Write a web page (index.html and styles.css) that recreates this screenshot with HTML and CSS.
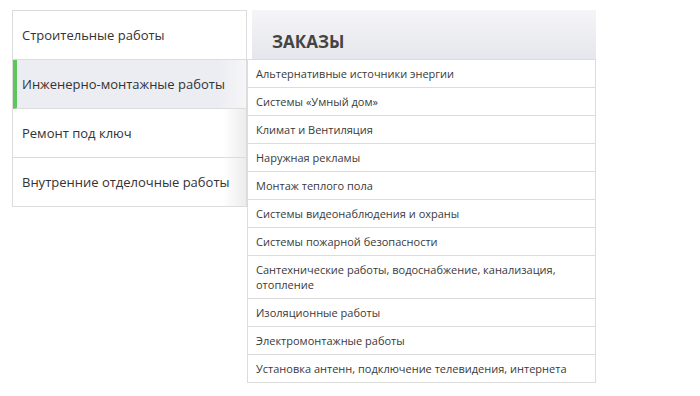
FILE: index.html
```html
<!DOCTYPE html>
<html lang="ru">
<head>
    <meta charset="UTF-8">
    <meta name="viewport" content="width=device-width, initial-scale=1.0">
    <title>Заказы</title>
    <link rel="stylesheet" href="styles.css">
</head>
<body>
    <div class="wrap">
        <ul class="menu">
            <li class="menu-item">Строительные работы</li>
            <li class="menu-item active">Инженерно-монтажные работы</li>
            <li class="menu-item">Ремонт под ключ</li>
            <li class="menu-item">Внутренние отделочные работы</li>
        </ul>

        <div class="panel">
            <div class="panel-head">ЗАКАЗЫ</div>
            <ul class="submenu">
                <li>Альтернативные источники энергии</li>
                <li>Системы «Умный дом»</li>
                <li>Климат и Вентиляция</li>
                <li>Наружная рекламы</li>
                <li>Монтаж теплого пола</li>
                <li>Системы видеонаблюдения и охраны</li>
                <li>Системы пожарной безопасности</li>
                <li>Сантехнические работы, водоснабжение, канализация, отопление</li>
                <li>Изоляционные работы</li>
                <li>Электромонтажные работы</li>
                <li>Установка антенн, подключение телевидения, интернета</li>
            </ul>
        </div>
    </div>
</body>
</html>
```

FILE: styles.css
```css
body {
    margin: 0;
    font-family: "Open Sans", "Noto Sans", sans-serif;
    color: #333;
    background: #fff;
}
ul {
    list-style: none;
    margin: 0;
    padding: 0;
}
.wrap {
    display: flex;
    align-items: flex-start;
    padding: 10px 0 0 12px;
}
.menu {
    width: 235px;
    box-sizing: border-box;
    border: 1px solid #dcdcdc;
    border-bottom: none;
}
.menu-item {
    height: 48px;
    display: flex;
    align-items: center;
    padding-left: 9px;
    font-size: 13px;
    border-bottom: 1px solid #dcdcdc;
    background: linear-gradient(to right, #fff 90%, #ececec);
}
.menu-item:first-child {
    background: #fff;
}
.menu-item.active {
    background: linear-gradient(to right, #ecedf2 88%, #f6f6f8);
    border-left: 4px solid #5cc65c;
    padding-left: 5px;
}
.panel {
    width: 349px;
}
.panel-head {
    margin-left: 5px;
    height: 49px;
    box-sizing: border-box;
    padding: 20px 0 0 20px;
    font-size: 17px;
    font-weight: 700;
    line-height: 24px;
    color: #444;
    background: linear-gradient(#f5f5f7, #e6e7ec);
}
.submenu {
    border: 1px solid #dcdcdc;
    background: #fff;
}
.submenu li {
    padding: 6px 20px 6px 8px;
    font-size: 11px;
    line-height: 15px;
    color: #3a3a3a;
    border-bottom: 1px solid #dcdcdc;
}
.submenu li:last-child {
    border-bottom: none;
}
```
